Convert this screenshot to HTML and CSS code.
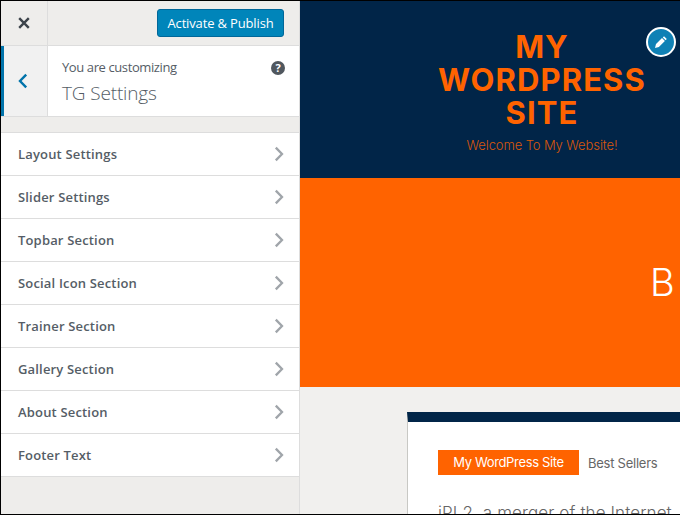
FILE: index.html
```html
<!DOCTYPE html>
<html lang="en">
<head>
<meta charset="utf-8">
<title>Customizer</title>
<link rel="stylesheet" href="styles.css">
</head>
<body>
<div class="frame">
  <aside class="sidebar">
    <div class="topbar">
      <button class="close" aria-label="Close">
        <svg width="14" height="14" viewBox="0 0 14 14"><path d="M2.2 2.2l9.6 9.6M11.8 2.2l-9.6 9.6" stroke="#3c434a" stroke-width="2.4" fill="none"/></svg>
      </button>
      <div class="topbar-actions"><button class="publish">Activate &amp; Publish</button></div>
    </div>
    <div class="info">
      <div class="back">
        <svg width="10" height="16" viewBox="0 0 10 16"><path d="M8.2 1.6L2 8l6.2 6.4" stroke="#0073aa" stroke-width="2.4" fill="none"/></svg>
      </div>
      <div class="title">
        <div class="eyebrow">You are customizing</div>
        <div class="heading">TG Settings</div>
      </div>
      <div class="help">?</div>
    </div>
    <ul class="menu">
      <li class="item"><span>Layout Settings</span><svg class="chev" width="10" height="16" viewBox="0 0 10 16"><path d="M1.8 1.6L8 8l-6.2 6.4" stroke="#a0a5aa" stroke-width="2.3" fill="none"/></svg></li>
      <li class="item"><span>Slider Settings</span><svg class="chev" width="10" height="16" viewBox="0 0 10 16"><path d="M1.8 1.6L8 8l-6.2 6.4" stroke="#a0a5aa" stroke-width="2.3" fill="none"/></svg></li>
      <li class="item"><span>Topbar Section</span><svg class="chev" width="10" height="16" viewBox="0 0 10 16"><path d="M1.8 1.6L8 8l-6.2 6.4" stroke="#a0a5aa" stroke-width="2.3" fill="none"/></svg></li>
      <li class="item"><span>Social Icon Section</span><svg class="chev" width="10" height="16" viewBox="0 0 10 16"><path d="M1.8 1.6L8 8l-6.2 6.4" stroke="#a0a5aa" stroke-width="2.3" fill="none"/></svg></li>
      <li class="item"><span>Trainer Section</span><svg class="chev" width="10" height="16" viewBox="0 0 10 16"><path d="M1.8 1.6L8 8l-6.2 6.4" stroke="#a0a5aa" stroke-width="2.3" fill="none"/></svg></li>
      <li class="item"><span>Gallery Section</span><svg class="chev" width="10" height="16" viewBox="0 0 10 16"><path d="M1.8 1.6L8 8l-6.2 6.4" stroke="#a0a5aa" stroke-width="2.3" fill="none"/></svg></li>
      <li class="item"><span>About Section</span><svg class="chev" width="10" height="16" viewBox="0 0 10 16"><path d="M1.8 1.6L8 8l-6.2 6.4" stroke="#a0a5aa" stroke-width="2.3" fill="none"/></svg></li>
      <li class="item"><span>Footer Text</span><svg class="chev" width="10" height="16" viewBox="0 0 10 16"><path d="M1.8 1.6L8 8l-6.2 6.4" stroke="#a0a5aa" stroke-width="2.3" fill="none"/></svg></li>
    </ul>
  </aside>
  <main class="preview">
    <header class="site-header">
      <div class="brand">
        <h1 class="site-title">MY WORDPRESS SITE</h1>
        <p class="tagline">Welcome To My Website!</p>
      </div>
      <div class="edit-pin">
        <svg width="16" height="16" viewBox="0 0 16 16"><path d="M11 2.2l2.8 2.8-1.2 1.2-2.8-2.8zM9 4l2.9 2.9-6 6L2 14l1-3.9z" fill="#fff"/></svg>
      </div>
    </header>
    <section class="hero"><span class="hero-text">B</span></section>
    <section class="content">
      <div class="card">
        <div class="tabs">
          <span class="tab-active">My WordPress Site</span>
          <span class="tab">Best Sellers</span>
        </div>
        <p class="card-text">iPL2, a merger of the Internet</p>
      </div>
    </section>
  </main>
</div>
</body>
</html>
```
FILE: styles.css
```css
* { box-sizing: border-box; }
html, body { margin: 0; height: 100%; overflow: hidden; }
body { background: #000; }
.frame {
  display: flex;
  width: 680px;
  height: 515px;
  padding: 1px 0 1px 1px;
  background: #000;
  overflow: hidden;
}
.sidebar {
  flex: 0 0 299px;
  display: flex;
  flex-direction: column;
  background: #eeedeb;
  border-right: 1px solid #ddd;
  font-family: "Open Sans", sans-serif;
}
.topbar {
  display: flex;
  height: 45px;
  flex: none;
  background: #eeedeb;
  border-bottom: 1px solid #ddd;
}
.close {
  width: 47px;
  border: 0;
  border-right: 1px solid #ddd;
  background: transparent;
  padding: 0;
  display: flex;
  align-items: center;
  justify-content: center;
}
.topbar-actions {
  flex: 1;
  display: flex;
  justify-content: flex-end;
  padding: 8px 15px 0 0;
}
.publish {
  width: 127px;
  height: 28px;
  padding: 0;
  border: 1px solid #006799;
  border-radius: 3px;
  background: #0085ba;
  color: #fff;
  font: 13px "Open Sans", sans-serif;
  letter-spacing: -0.15px;
}
.info {
  display: flex;
  height: 71px;
  flex: none;
  background: #fff;
  border-bottom: 1px solid #ddd;
}
.back {
  width: 47px;
  flex: none;
  display: flex;
  align-items: center;
  justify-content: center;
  padding-right: 6px;
  background: #f1f1f1;
  border-left: 3px solid #0073aa;
  border-right: 1px solid #ddd;
}
.title { flex: 1; padding-top: 12px; }
.eyebrow {
  font-size: 13px;
  line-height: 18px;
  color: #555d66;
  padding-left: 14px;
  letter-spacing: -0.4px;
}
.heading {
  font-size: 19px;
  line-height: 28px;
  font-weight: 300;
  color: #555d66;
  padding: 3px 0 0 14px;
  letter-spacing: -0.15px;
}
.help {
  width: 14px;
  height: 14px;
  margin: 15px 14px 0 0;
  border-radius: 50%;
  background: #50575e;
  color: #fff;
  font: 700 11px/14px "Open Sans", sans-serif;
  text-align: center;
}
.menu {
  list-style: none;
  margin: 15px 0 0;
  padding: 0;
  border-top: 1px solid #ddd;
}
.item {
  display: flex;
  align-items: center;
  justify-content: space-between;
  height: 43px;
  padding: 0 15px 0 17px;
  background: #fff;
  border-bottom: 1px solid #ddd;
  font-size: 13px;
  font-weight: 600;
  letter-spacing: 0.17px;
  color: #555d66;
}
.preview {
  flex: 1;
  min-width: 0;
  display: flex;
  flex-direction: column;
  background: #f1f0ee;
  font-family: "Inter", "Open Sans", sans-serif;
  overflow: hidden;
}
.site-header {
  position: relative;
  flex: none;
  height: 177px;
  background: #012548;
  display: flex;
  justify-content: center;
  padding: 29px 0 0 104px;
}
.brand { width: 216px; text-align: center; flex: none; }
.site-title {
  margin: 0;
  font-size: 31px;
  line-height: 33px;
  font-weight: 700;
  letter-spacing: 1.1px;
  color: #ff6300;
}
.tagline {
  margin: 7px 0 0;
  font-size: 13px;
  line-height: 18px;
  font-weight: 300;
  letter-spacing: -0.1px;
  color: #d9570a;
}
.edit-pin {
  position: absolute;
  top: 26px;
  right: 4px;
  width: 30px;
  height: 30px;
  border: 2px solid #fff;
  border-radius: 50%;
  background: #0f81b5;
  display: flex;
  align-items: center;
  justify-content: center;
}
.hero {
  flex: none;
  height: 209px;
  background: #ff6300;
  display: flex;
  padding: 80px 0 0 350px;
}
.hero-text {
  color: #fff;
  font-size: 38px;
  line-height: 48px;
  font-weight: 300;
}
.content { flex: 1; padding: 25px 0 0 107px; }
.card {
  width: 400px;
  height: 120px;
  background: #fff;
  border-top: 10px solid #012548;
  border-left: 1px solid #c8c8c4;
  padding: 28px 0 0 30px;
}
.tabs { display: flex; align-items: center; font-size: 13px; font-weight: 300; }
.tab-active {
  width: 141px;
  height: 25px;
  line-height: 25px;
  text-align: center;
  background: #ff6300;
  color: #fff;
  font-weight: 400;
  letter-spacing: -0.35px;
}
.tab { margin-left: 9px; color: #666; letter-spacing: -0.25px; font-weight: 400; }
.card-text {
  margin: 26px 0 0;
  font-size: 17px;
  line-height: 24px;
  font-weight: 300;
  color: #666;
  white-space: nowrap;
  letter-spacing: 0.1px;
}
```
